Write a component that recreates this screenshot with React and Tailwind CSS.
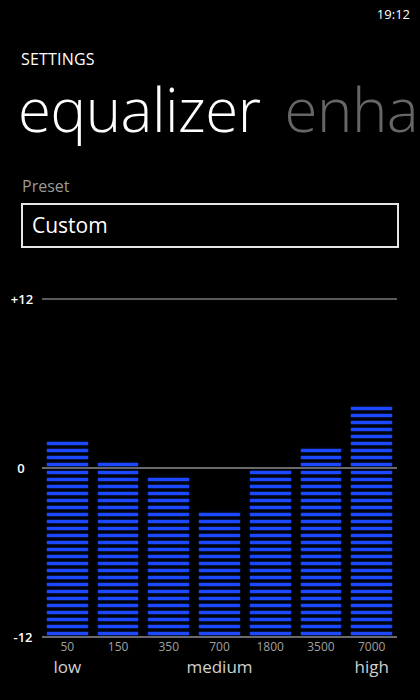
const bands = [
  { freq: "50", level: 28, tag: "low" },
  { freq: "150", level: 25, tag: "" },
  { freq: "350", level: 23, tag: "" },
  { freq: "700", level: 18, tag: "medium" },
  { freq: "1800", level: 24, tag: "" },
  { freq: "3500", level: 27, tag: "" },
  { freq: "7000", level: 33, tag: "high" },
];

function Stripes({ count }) {
  return Array.from({ length: count }).map((_, i) => (
    <div
      key={i}
      className="h-[3px] w-full shrink-0 bg-[#1c48ff] shadow-[0_0_2px_#1c48ff]"
    />
  ));
}

export default function App() {
  return (
    <div className="w-[420px] h-[700px] overflow-hidden bg-black text-white font-['Open_Sans',sans-serif]">
      <div className="flex justify-end pr-[10px] pt-[5px] text-[13px] leading-[18px]">
        19:12
      </div>

      <div className="pl-[21px] pt-[26px] text-[16px] leading-[20px] tracking-[0.2px]">
        SETTINGS
      </div>

      <div className="flex gap-[24px] whitespace-nowrap pl-[18px] mt-[8px] h-[64px] text-[60px] leading-[64px] font-light tracking-[-0.5px]">
        <span>equalizer</span>
        <span className="text-[#666]">enha</span>
      </div>

      <div className="pl-[22px] mt-[35px] text-[16px] leading-[20px] text-[#9a9a9a]">
        Preset
      </div>

      <div className="mx-[21px] mt-[7px] h-[45px] border-2 border-[#e6e6e6] flex items-center pl-[9px] text-[21px]">
        Custom
      </div>

      <div className="flex mt-[42px]">
        <div className="w-[42px] h-[356px] flex flex-col justify-between items-center text-[13px] font-semibold">
          <div className="h-[18px] leading-[18px] pl-[2px]">+12</div>
          <div className="h-[18px] leading-[18px]">0</div>
          <div className="h-[18px] leading-[18px] pl-[4px]">-12</div>
        </div>

        <div className="flex-1 mr-[23px] mt-[8px]">
          <div className="h-[2px] bg-[#5a5a5a]" />
          <div className="h-[167px] grid grid-cols-7 gap-x-[10px] px-[5px]">
            {bands.map((b) => (
              <div key={b.freq} className="flex flex-col justify-end gap-[4px] pb-[1px]">
                <Stripes count={Math.max(0, b.level - 24)} />
              </div>
            ))}
          </div>
          <div className="h-[2px] bg-[#6a6a6a]" />
          <div className="h-[167px] grid grid-cols-7 gap-x-[10px] px-[5px]">
            {bands.map((b) => (
              <div key={b.freq} className="flex flex-col justify-end gap-[4px] pb-[1px]">
                <Stripes count={Math.min(24, b.level)} />
              </div>
            ))}
          </div>
          <div className="h-[2px] bg-[#6a6a6a]" />

          <div className="grid grid-cols-7 gap-x-[10px] px-[5px] text-center">
            {bands.map((b) => (
              <div key={b.freq} className="flex flex-col items-center">
                <div className="text-[12px] leading-[18px] text-[#a0a0a0]">{b.freq}</div>
                <div className="text-[17px] leading-[22px] text-[#d0d0d0] h-[22px]">{b.tag}</div>
              </div>
            ))}
          </div>
        </div>
      </div>
    </div>
  );
}
